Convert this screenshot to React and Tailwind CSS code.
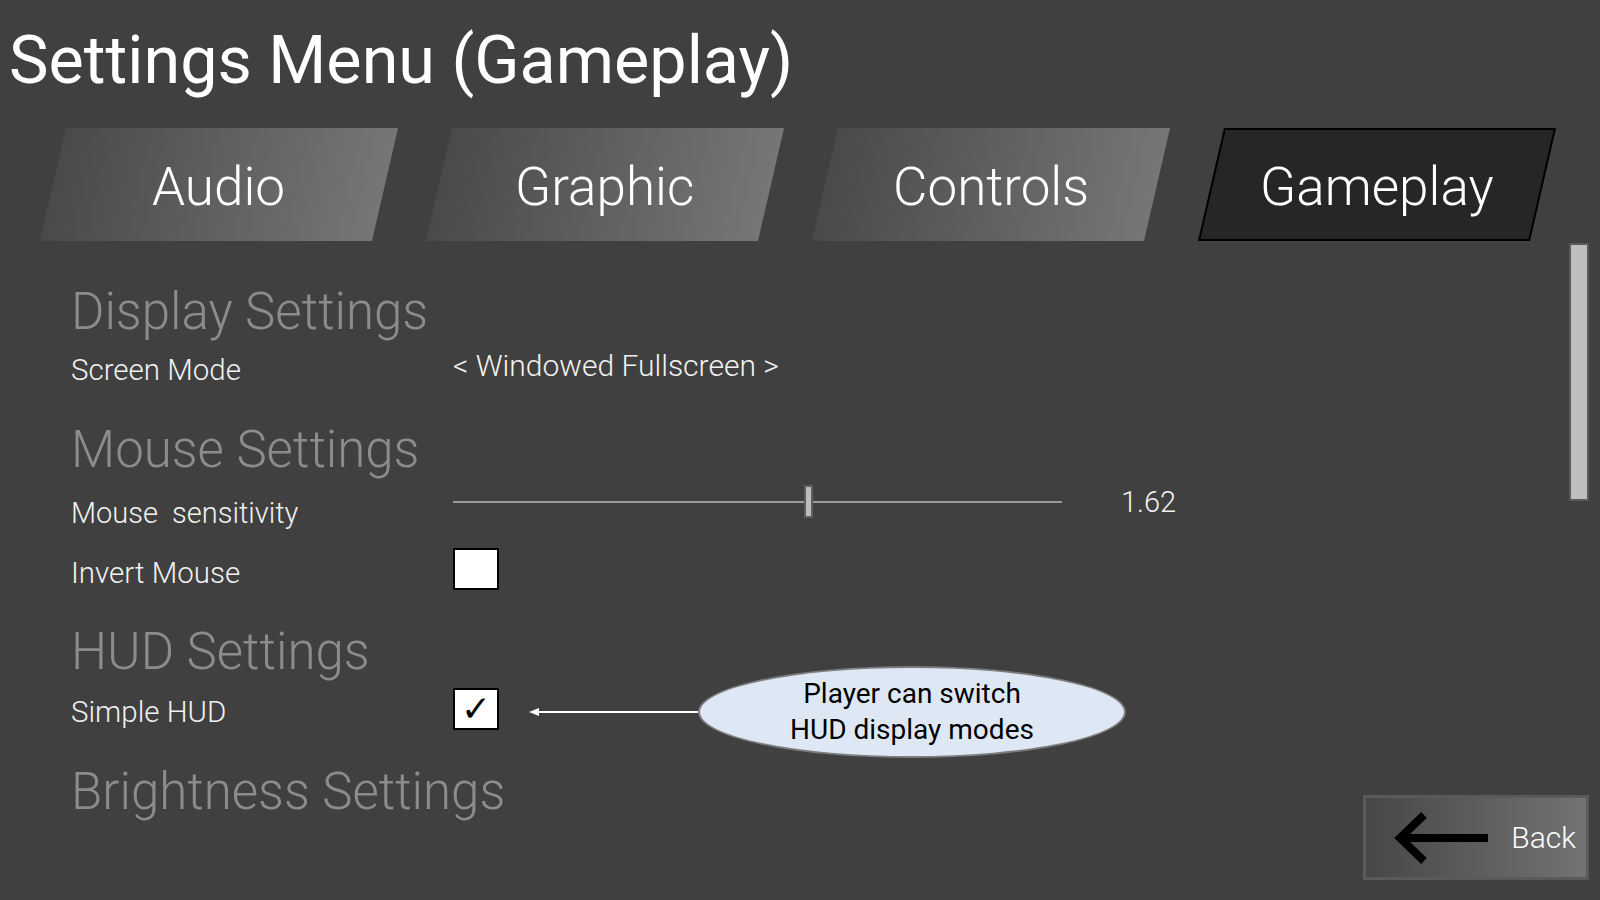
import React from "react";

const tabs = ["Audio", "Graphic", "Controls", "Gameplay"];
const activeTab = "Gameplay";

const Heading = ({ children, className = "" }) => (
  <div className={`flex items-center h-[50px] ${className}`}>
    <span className="text-[51px] leading-none font-light text-[#8c8c8c]">{children}</span>
  </div>
);

const Label = ({ children }) => (
  <span className="w-[382px] shrink-0 text-[29.5px] leading-none font-light text-[#f2f2f2] whitespace-pre">
    {children}
  </span>
);

const Checkbox = ({ checked }) => (
  <div className="w-[46px] h-[42px] bg-white border-2 border-black flex items-center justify-center">
    {checked && (
      <span className="text-[36px] leading-none text-black font-['DejaVu_Sans',sans-serif] font-bold">
        ✓
      </span>
    )}
  </div>
);

export default function App() {
  return (
    <div className="relative w-[1600px] h-[900px] overflow-hidden bg-[#404040] font-['Roboto','Liberation_Sans',sans-serif]">
      {/* title */}
      <div className="h-[128px] pt-[27px] pl-[9px]">
        <h1 className="text-[66.5px] leading-none text-white">Settings Menu (Gameplay)</h1>
      </div>

      {/* tabs */}
      <div className="flex h-[113px] gap-[54px] pl-[53px]">
        {tabs.map((tab) => (
          <div
            key={tab}
            className={`w-[332px] h-full skew-x-[-13deg] flex items-center justify-center ${
              tab === activeTab
                ? "bg-[#262626] border-2 border-black"
                : "bg-linear-to-r from-[#4a4a4a] to-[#767676]"
            }`}
          >
            <span className="skew-x-[13deg] pt-[6px] text-[53px] leading-none font-light text-white">
              {tab}
            </span>
          </div>
        ))}
      </div>

      {/* content + scrollbar */}
      <div className="flex">
        <div className="flex-1 pl-[71px]">
          <Heading className="mt-[45px]">Display Settings</Heading>

          <div className="flex items-center h-[50px] mt-[10px]">
            <Label>Screen Mode</Label>
            <span className="mb-[10px] text-[30px] leading-none font-light text-[#f2f2f2]">
              &lt; Windowed Fullscreen &gt;
            </span>
          </div>

          <Heading className="mt-[28px]">Mouse Settings</Heading>

          <div className="flex items-center h-[50px] mt-[13px]">
            <div className="w-[382px] shrink-0 pt-[4px]">
              <span className="text-[29px] leading-none font-light text-[#f2f2f2] whitespace-pre">
                Mouse  sensitivity
              </span>
            </div>
            <div className="flex items-center mb-[20px]">
              <div className="relative w-[609px] h-[2px] bg-[#9a9a9a]">
                <div className="absolute left-[351px] top-[-16px] w-[9px] h-[33px] bg-[#bdbdbd] border-2 border-[#5e5e5e]" />
              </div>
              <span className="ml-[59px] text-[29px] leading-none font-light text-[#f2f2f2]">1.62</span>
            </div>
          </div>

          <div className="flex items-center h-[50px] mt-[12px]">
            <Label>Invert Mouse</Label>
            <div className="mb-[10px]">
              <Checkbox checked={false} />
            </div>
          </div>

          <Heading className="mt-[27px]">HUD Settings</Heading>

          <div className="flex items-center h-[50px] mt-[12px]">
            <Label>Simple HUD</Label>
            <div className="flex items-center mb-[8px]">
              <Checkbox checked />
              <svg width="169" height="12" viewBox="0 0 169 12" className="ml-[30px] mt-[6px]">
                <line x1="6" y1="6" x2="169" y2="6" stroke="#ffffff" strokeWidth="2" />
                <polygon points="0,6 10,2 10,10" fill="#ffffff" />
              </svg>
              <div className="w-[428px] h-[92px] mt-[6px] rounded-[50%] bg-[#dee8f5] border-2 border-[#7c7c7c] flex flex-col items-center justify-center">
                <span className="text-[28px] leading-[36px] text-black">Player can switch</span>
                <span className="text-[28px] leading-[36px] text-black">HUD display modes</span>
              </div>
            </div>
          </div>

          <Heading className="mt-[28px]">Brightness Settings</Heading>
        </div>

        {/* scrollbar */}
        <div className="w-[20px] h-[258px] mt-[2px] mr-[11px] bg-[#bdbec0] border-2 border-[#5a5a5a]" />
      </div>

      {/* back button */}
      <button className="absolute right-[11px] bottom-[20px] w-[226px] h-[85px] flex items-center justify-between pl-[28px] pr-[10px] bg-linear-to-r from-[#474747] to-[#737373] border-[3px] border-[#5a5a5a]">
        <svg width="96" height="54" viewBox="0 0 96 54">
          <path
            d="M94 27 H6 M30 4 L6 27 L30 50"
            fill="none"
            stroke="#000000"
            strokeWidth="8"
            strokeLinejoin="miter"
          />
        </svg>
        <span className="text-[30px] leading-none font-light text-white">Back</span>
      </button>
    </div>
  );
}
